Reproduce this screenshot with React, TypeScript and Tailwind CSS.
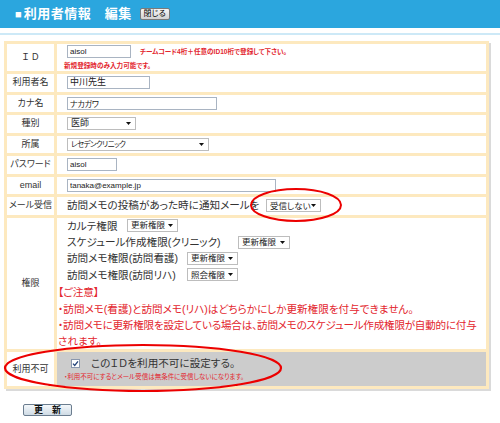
import React from 'react';

const Caret: React.FC = () => (
  <svg width="5" height="3" viewBox="0 0 5 3" className="shrink-0">
    <path d="M0 0h5L2.5 3z" fill="#111" />
  </svg>
);

const Select: React.FC<{ value: string; w: string; cls?: string }> = ({ value, w, cls = 'text-[9px]' }) => (
  <div className={`${w} ${cls} h-[13px] border border-[#bdbdbd] bg-white flex items-center justify-between pl-[3px] pr-[4px] leading-none text-[#222] whitespace-nowrap`}>
    <span>{value}</span>
    <Caret />
  </div>
);

const TextBox: React.FC<{ value: string; w: string; cls?: string }> = ({ value, w, cls = 'text-[8px]' }) => (
  <input
    readOnly
    value={value}
    className={`${w} ${cls} h-[13px] border border-[#a9b4c2] bg-white px-[2px] text-[#222] outline-none`}
  />
);

const Label: React.FC<{ children: React.ReactNode }> = ({ children }) => (
  <div className="bg-white flex items-center justify-center text-[9px] text-[#333] leading-none">{children}</div>
);

const App: React.FC = () => {
  return (
    <div className="relative w-[500px] h-[423px] bg-white font-['Liberation_Sans','Noto_Sans_CJK_JP',sans-serif] [font-feature-settings:'palt']">
      {/* header */}
      <div className="h-[28px] bg-[#2ba6de] flex items-center pl-[15px] text-white font-bold">
        <span className="text-[11px] mr-[2px]">■</span>
        <span className="text-[13px] tracking-[0.5px]">利用者情報　編集</span>
        <button className="ml-[8px] w-[30px] h-[12px] border border-[#7a7a7a] rounded-[2px] bg-gradient-to-b from-[#f6f6f6] to-[#d2d2d2] text-[8px] font-normal text-black leading-none">
          閉じる
        </button>
      </div>
      <div className="mt-[5px] h-[2px] bg-[#cde9f7]" />

      {/* form table */}
      <div className="mt-[6px] ml-[4px] w-[485px] bg-[#fde9bf] p-[3px] shadow-[2px_2px_0_#dadada] grid grid-cols-[47px_429px] grid-rows-[27px_repeat(7,17.5px)_131.5px_34px] gap-[3px]">
        <Label>Ｉ Ｄ</Label>
        <div className="bg-white pt-[1px]">
          <div className="flex items-center pl-[10px]">
            <TextBox value="aisol" w="w-[64px]" />
            <span className="ml-[9px] text-[6.6px] text-[#e3262e] font-bold">チームコード4桁＋任意のID10桁で登録して下さい。</span>
          </div>
          <div className="pl-[7px] mt-[4px] text-[6.6px] leading-[8px] text-[#e3262e] font-bold">新規登録時のみ入力可能です。</div>
        </div>

        <Label>利用者名</Label>
        <div className="bg-white flex items-center pl-[10px]">
          <TextBox value="中川先生" w="w-[83px]" cls="text-[9px]" />
        </div>

        <Label>カナ名</Label>
        <div className="bg-white flex items-center pl-[10px]">
          <TextBox value="ナカガワ" w="w-[150px]" cls="text-[8px] tracking-[-0.3px]" />
        </div>

        <Label>種別</Label>
        <div className="bg-white flex items-center pl-[10px]">
          <Select value="医師" w="w-[69px]" />
        </div>

        <Label>所属</Label>
        <div className="bg-white flex items-center pl-[10px]">
          <Select value="レセデンクリニック" w="w-[142px]" cls="text-[7.5px] tracking-[-0.6px]" />
        </div>

        <Label>パスワード</Label>
        <div className="bg-white flex items-center pl-[10px]">
          <TextBox value="aisol" w="w-[50px]" />
        </div>

        <Label>email</Label>
        <div className="bg-white flex items-center pl-[10px]">
          <TextBox value="tanaka@example.jp" w="w-[209px]" />
        </div>

        <Label>メール受信</Label>
        <div className="bg-white flex items-center pl-[10px] text-[10.6px] text-[#333]">
          <span className="w-[199px] whitespace-nowrap">訪問メモの投稿があった時に通知メールを</span>
          <Select value="受信しない" w="w-[55px]" cls="text-[8.5px]" />
        </div>

        <Label>権限</Label>
        <div className="bg-white text-[10.6px] leading-[16.4px] text-[#333]">
          <div className="pl-[10px]">
            <div className="flex items-center">
              <span className="w-[60px]">カルテ権限</span>
              <Select value="更新権限" w="w-[51px]" cls="text-[8.5px]" />
            </div>
            <div className="flex items-center">
              <span className="w-[171px]">スケジュール作成権限(クリニック)</span>
              <Select value="更新権限" w="w-[52px]" cls="text-[8.5px]" />
            </div>
            <div className="flex items-center">
              <span className="w-[120px]">訪問メモ権限(訪問看護)</span>
              <Select value="更新権限" w="w-[51px]" cls="text-[8.5px]" />
            </div>
            <div className="flex items-center">
              <span className="w-[120px]">訪問メモ権限(訪問リハ)</span>
              <Select value="照会権限" w="w-[51px]" cls="text-[8.5px]" />
            </div>
          </div>
          <div className="pl-[1px] text-[#e3262e] whitespace-nowrap">
            <div className="mt-[1px]">【ご注意】</div>
            <div>・訪問メモ(看護)と訪問メモ(リハ)はどちらかにしか更新権限を付与できません。</div>
            <div className="tracking-[-0.25px]">・訪問メモに更新権限を設定している場合は、訪問メモのスケジュール作成権限が自動的に付与</div>
            <div>されます。</div>
          </div>
        </div>

        <Label>利用不可</Label>
        <div className="bg-[#cccccc] pl-[14px] pt-[4px]">
          <div className="flex items-center h-[15px]">
            <span className="w-[9px] h-[9px] border border-[#8a97ad] bg-white flex items-center justify-center">
              <svg width="7" height="7" viewBox="0 0 7 7">
                <path d="M1 3.6l1.7 1.8L6 1.3" fill="none" stroke="#24437a" strokeWidth="1.3" />
              </svg>
            </span>
            <span className="ml-[11px] text-[10.6px] text-[#333]">このＩＤを利用不可に設定する。</span>
          </div>
          <div className="-ml-[7px] mt-[2px] text-[6.5px] leading-[8px] text-[#e3262e]">・利用不可にするとメール受信は無条件に受信しないになります。</div>
        </div>
      </div>

      {/* update button */}
      <div className="flex pl-[23px] mt-[15px]">
        <button className="w-[49px] h-[12px] border border-[#6b7d8f] rounded-[2px] bg-gradient-to-b from-[#f4f8fb] to-[#cfdbe5] text-[9px] font-bold text-[#111] leading-none">
          更　新
        </button>
      </div>

      {/* red marker ellipses drawn over the form */}
      <svg className="absolute left-0 top-0 pointer-events-none" width="500" height="423">
        <ellipse cx="296" cy="205" rx="45" ry="16" fill="none" stroke="#ec0000" strokeWidth="2" />
        <ellipse cx="143" cy="368" rx="138" ry="23" fill="none" stroke="#ec0000" strokeWidth="2.2" />
      </svg>
    </div>
  );
};

export default App;
